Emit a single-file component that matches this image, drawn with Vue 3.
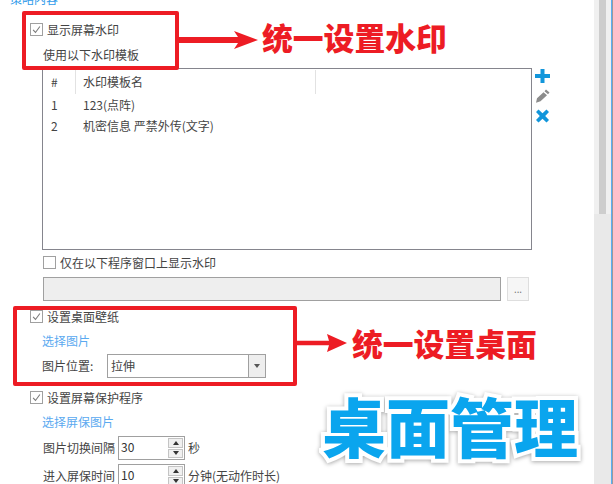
<script setup>
const rows = [
  { id: 1, name: '123(点阵)' },
  { id: 2, name: '机密信息 严禁外传(文字)' }
]
</script>

<template>
  <div class="page">
    <main class="main">
      <div class="title">策略内容</div>

      <label class="check first"><span class="box on"><svg viewBox="0 0 13 13"><path d="M2.500 7l2.800 3 5.200-7" /></svg></span>显示屏幕水印</label>
      <div class="sub">使用以下水印模板</div>

      <div class="list-wrap">
        <div class="list">
          <div class="head">
            <span class="c1">#</span>
            <span class="c2">水印模板名</span>
          </div>
          <div v-for="r in rows" :key="r.id" class="row">
            <span class="c1">{{ r.id }}</span>
            <span class="c2">{{ r.name }}</span>
          </div>
        </div>
        <div class="tools">
          <svg viewBox="0 0 15 14"><path class="blue" d="M5.500 0h4v5h5.500v4h-5.500v5h-4v-5h-5.500v-4h5.500z" /></svg>
          <svg viewBox="0 0 15 14"><path class="grey" d="M11 0.500l3.500 3-1.500 1.800-3.500-3zM8.500 3.300l3.500 3-6.500 6-4.500 1.500 1-4.500z" /></svg>
          <svg viewBox="0 0 15 14"><path class="blue" d="M3.500 0.500l4 3.700 4-3.700 2.500 2.500-3.800 4 3.800 4-2.500 2.500-4-3.700-4 3.700-2.500-2.500 3.800-4-3.800-4z" /></svg>
        </div>
      </div>

      <label class="check only"><span class="box"></span>仅在以下程序窗口上显示水印</label>
      <div class="path-row">
        <div class="path"></div>
        <button class="dots">...</button>
      </div>

      <label class="check wall"><span class="box on"><svg viewBox="0 0 13 13"><path d="M2.500 7l2.800 3 5.200-7" /></svg></span>设置桌面壁纸</label>
      <a class="link l1">选择图片</a>
      <div class="pos">
        <span class="lab">图片位置:</span>
        <div class="select">
          <span class="val">拉伸</span>
          <span class="drop"><i></i></span>
        </div>
      </div>

      <label class="check saver"><span class="box on"><svg viewBox="0 0 13 13"><path d="M2.500 7l2.800 3 5.200-7" /></svg></span>设置屏幕保护程序</label>
      <a class="link l2">选择屏保图片</a>
      <div class="num n1">
        <span class="lab">图片切换间隔</span>
        <div class="spin">
          <span class="v">30</span>
          <span class="arrows"><b><i class="up"></i></b><b><i class="down"></i></b></span>
        </div>
        <span class="unit">秒</span>
      </div>
      <div class="num n2">
        <span class="lab">进入屏保时间</span>
        <div class="spin">
          <span class="v">10</span>
          <span class="arrows"><b><i class="up"></i></b><b><i class="down"></i></b></span>
        </div>
        <span class="unit">分钟(无动作时长)</span>
      </div>

      <!-- annotations laid over the screenshot -->
      <div class="mark m1"></div>
      <div class="mark m2"></div>
      <svg class="arrow a1" viewBox="0 0 80 20"><path d="M0 7h60L56 1 80 10 56 19 60 13H0z" /></svg>
      <svg class="arrow a2" viewBox="0 0 51 18"><path d="M0 6.750h33L31 0 51 9 31 18 33 11.250H0z" /></svg>
      <div class="note n-a">统一设置水印</div>
      <div class="note n-b">统一设置桌面</div>
      <div class="big">桌面管理</div>
    </main>
    <aside class="bar"><div class="thumb"></div></aside>
  </div>
</template>

<style>
html, body { margin: 0; background: #fff; }
</style>

<style scoped>
.page {
  width: 613px;
  height: 484px;
  display: flex;
  overflow: hidden;
  background: #fff;
  font: 12px/16px "Noto Sans CJK SC", "Noto Sans", sans-serif;
  color: #444;
}
.main {
  position: relative;
  width: 594px;
  height: 484px;
  overflow: hidden;
  display: flex;
  flex-direction: column;
  align-items: flex-start;
}
.title {
  color: #2f9bea;
  font-size: 12px;
  line-height: 16px;
  margin: -9px 0 0 10px;
}
.check { display: flex; align-items: center; gap: 4px; height: 15px; }
.box {
  width: 13px;
  height: 13px;
  box-sizing: border-box;
  border: 1px solid #a0a0a0;
  display: block;
  background: #fff;
}
.box svg { display: block; width: 11px; height: 11px; }
.box path { fill: none; stroke: #7a7a7a; stroke-width: 1.300; }
.first { margin: 15px 0 0 30px; }
.sub { margin: 10px 0 0 43px; }
.list-wrap { display: flex; margin: 5px 0 0 42px; gap: 3px; }
.list {
  width: 490px;
  height: 182px;
  box-sizing: border-box;
  border: 1px solid #85858d;
  padding-top: 1px;
}
.head { display: flex; height: 24px; align-items: center; }
.row { display: flex; height: 21px; align-items: center; }
.c1 { width: 33px; padding-left: 8px; box-sizing: border-box; }
.c2 { padding-left: 7px; box-sizing: border-box; }
.head .c1 { border-right: 1px solid #e2e2e2; height: 24px; line-height: 24px; }
.head .c2 { width: 240px; border-right: 1px solid #e2e2e2; height: 24px; line-height: 24px; }
.tools { display: flex; flex-direction: column; gap: 6px; padding-top: 1px; }
.tools svg { display: block; width: 15px; height: 14px; }
.blue { fill: #1296db; }
.grey { fill: #8c8c8c; }
.only { margin: 5px 0 0 43px; }
.path-row { display: flex; margin: 7px 0 0 43px; gap: 6px; }
.path {
  width: 458px;
  height: 24px;
  box-sizing: border-box;
  border: 1px solid #a0a0a0;
  background: #eeeeee;
}
.dots {
  width: 22px;
  height: 24px;
  padding: 0;
  box-sizing: border-box;
  border: 1px solid #dedede;
  background: #f6f6f6;
  color: #777;
  font: 10px/18px "Noto Sans", sans-serif;
}
.wall { margin: 8px 0 0 30px; }
.link { color: #5aa9f0; }
.l1 { margin: 9px 0 0 42px; }
.pos { display: flex; align-items: center; margin: 5px 0 0 42px; }
.lab { width: 65px; }
.select {
  display: flex;
  width: 159px;
  height: 24px;
  box-sizing: border-box;
  border: 1px solid #a0a0a0;
  align-items: center;
}
.val { flex: 1; padding-left: 3px; }
.drop {
  width: 16px;
  height: 22px;
  background: #eeeeee;
  border-left: 1px solid #a0a0a0;
  display: flex;
  align-items: center;
  justify-content: center;
}
.drop i {
  border: 3.500px solid transparent;
  border-top: 4px solid #555;
  border-bottom: 0;
}
.saver { margin: 12px 0 0 30px; }
.l2 { margin: 9px 0 0 42px; }
.num { display: flex; align-items: center; margin-left: 43px; }
.n1 { margin-top: 6px; }
.n2 { margin-top: 4px; }
.num .lab { width: 75px; }
.spin {
  display: flex;
  width: 67px;
  height: 24px;
  box-sizing: border-box;
  border: 1px solid #a0a0a0;
}
.v { flex: 1; padding-left: 2px; font: 12px/19px "Noto Sans CJK SC", sans-serif; color: #333; }
.arrows { width: 15px; margin: 1px 1px 1px 0; display: flex; flex-direction: column; gap: 1px; }
.arrows b {
  flex: 1;
  background: #f0f0f0;
  border: 1px solid #c4c4c4;
  box-sizing: border-box;
  display: flex;
  align-items: center;
  justify-content: center;
}
.up { border: 3px solid transparent; border-bottom: 4px solid #333; border-top: 0; }
.down { border: 3px solid transparent; border-top: 4px solid #333; border-bottom: 0; }
.unit { margin-left: 3px; }

.mark {
  position: absolute;
  box-sizing: border-box;
  border: 4px solid #ed1c24;
  border-radius: 2px;
}
.m1 { left: 22px; top: 11px; width: 157px; height: 59px; }
.m2 { left: 13px; top: 306px; width: 284px; height: 80px; }
.arrow { position: absolute; fill: #ed1c24; }
.a1 { left: 178px; top: 30px; width: 80px; height: 20px; }
.a2 { left: 296px; top: 334px; width: 51px; height: 18px; }
.note {
  position: absolute;
  color: #ed1c24;
  font-size: 30.800px;
  line-height: 36px;
  font-weight: 900;
  white-space: nowrap;
}
.n-a { left: 262px; top: 19px; }
.n-b { left: 352px; top: 325px; }
.big {
  position: absolute;
  left: 322px;
  top: 384px;
  font-size: 64px;
  line-height: 80px;
  font-weight: 900;
  color: #0aa5ee;
  white-space: nowrap;
  -webkit-text-stroke: 8px #fff;
  paint-order: stroke fill;
  filter: drop-shadow(0 1px 2px rgba(0, 0, 0, 0.35));
}
.bar {
  width: 19px;
  height: 484px;
  box-sizing: border-box;
  background: linear-gradient(#f0f0f0 214px, #e9e9e9 214px);
  padding-left: 5px;
  border-right: 1px solid #9a9a9a;
  box-shadow: inset -1px 0 #5aaef5;
}
.thumb { width: 7px; height: 214px; background: #cdcdcd; }
</style>
